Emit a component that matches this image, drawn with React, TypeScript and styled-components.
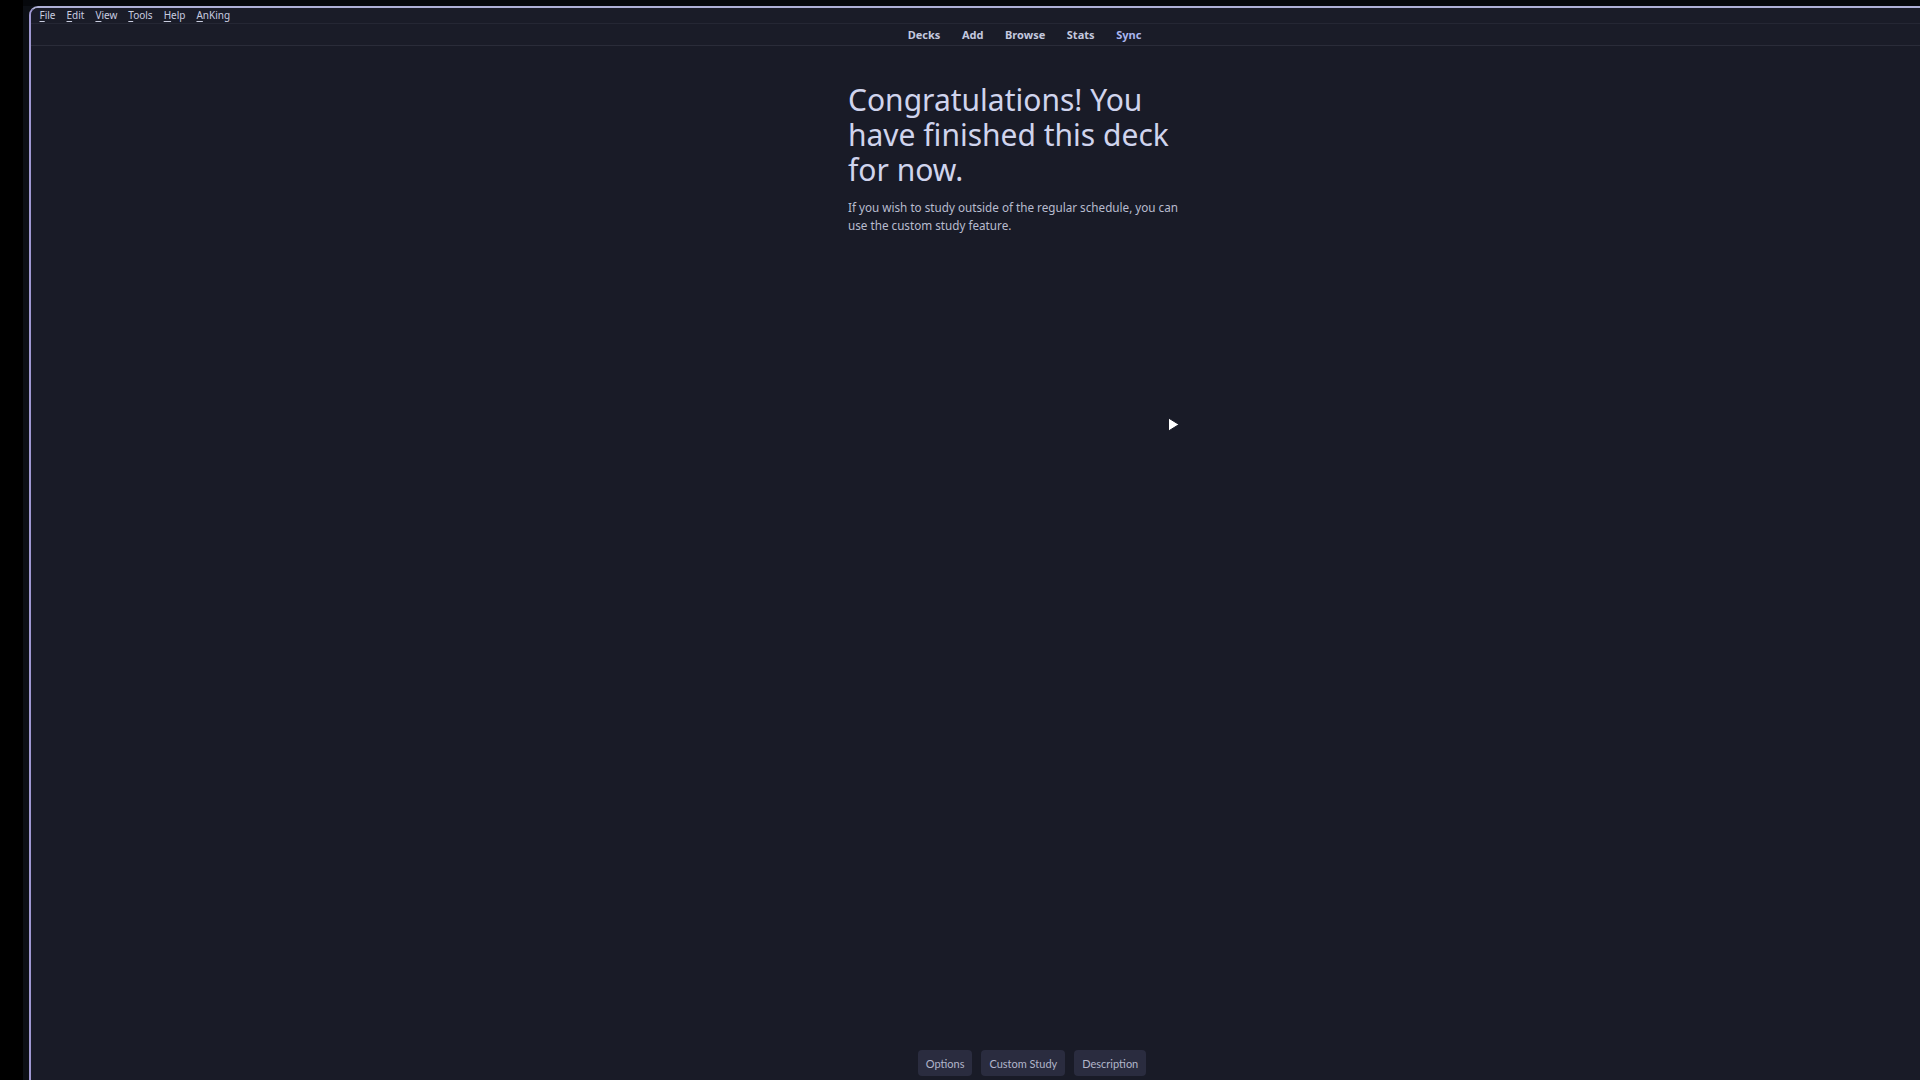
import React from "react";
import styled, { createGlobalStyle } from "styled-components";

const GlobalStyle = createGlobalStyle`
  html, body {
    margin: 0;
    padding: 0;
    width: 100%;
    height: 100%;
    overflow: hidden;
    background: #000;
  }
  #root {
    height: 100%;
  }
`;

const Screen = styled.div`
  display: flex;
  width: 1920px;
  height: 1080px;
  overflow: hidden;
  background: #000;
  position: relative;
`;

const BlackStrip = styled.div`
  flex: 0 0 23px;
  background: #000;
`;

const Gutter = styled.div`
  flex: 1 1 auto;
  min-width: 0;
  display: flex;
  padding: 6px 0 0 6px;
  background: linear-gradient(180deg, #06080c 0px, #06080c 6px, #0c0f15 6px);
  overflow: hidden;
`;

const Window = styled.div`
  flex: 0 0 1988px;
  width: 1988px;
  height: 1074px;
  display: flex;
  flex-direction: column;
  box-sizing: border-box;
  background: #191b27;
  border-top: 2px solid #aeb0d6;
  border-left: 2px solid #9f98d2;
  border-top-left-radius: 9px;
  overflow: hidden;
`;

const MenuBar = styled.div`
  height: 15px;
  display: flex;
  align-items: center;
  padding-left: 3px;
  border-bottom: 1px solid #252734;
  background: #1a1c28;
`;

const MenuItem = styled.span`
  padding: 0 5.5px;
  font-family: "Noto Sans", sans-serif;
  font-size: 10px;
  line-height: 15px;
  color: #c9cde0;
`;

const Mnemonic = styled.span`
  text-decoration: underline;
  text-underline-offset: 2px;
`;

const Toolbar = styled.nav`
  height: 21px;
  display: flex;
  align-items: center;
  justify-content: center;
  padding-left: 1px;
  border-bottom: 1px solid #2a2c39;
  background: #1a1c28;
`;

const NavLink = styled.span<{ $accent?: boolean }>`
  padding: 0 10.8px;
  font-family: "Noto Sans", sans-serif;
  font-size: 11px;
  font-weight: 700;
  line-height: 21px;
  color: ${(p) => (p.$accent ? "#a9b6ef" : "#c3c8df")};
`;

const Main = styled.main`
  flex: 1 1 auto;
  display: flex;
  justify-content: center;
  align-items: flex-start;
  padding: 36px 4px 0 0;
`;

const Congrats = styled.section`
  width: 348px;
  font-family: "Noto Sans", sans-serif;
`;

const Heading = styled.h1`
  margin: 0 0 11px;
  font-size: 30px;
  font-weight: 400;
  line-height: 35px;
  color: #d0d4ed;
`;

const Para = styled.p`
  margin: 0;
  font-size: 11.7px;
  line-height: 18px;
  color: #b8bccf;
`;

const BottomBar = styled.footer`
  display: flex;
  justify-content: center;
  gap: 9px;
  padding: 0 0 4px 16px;
`;

const Button = styled.button`
  height: 26px;
  padding: 0 8px;
  border: none;
  border-radius: 4px;
  background: #2a2c3f;
  color: #b1b5ca;
  font-family: "Lato", sans-serif;
  font-size: 11px;
  cursor: default;
`;

const Cursor = styled.svg`
  position: absolute;
  left: 1167px;
  top: 417px;
`;

const menus = ["File", "Edit", "View", "Tools", "Help", "AnKing"];
const navs = ["Decks", "Add", "Browse", "Stats", "Sync"];

export default function App() {
  return (
    <>
      <GlobalStyle />
      <Screen>
        <BlackStrip />
        <Gutter>
          <Window>
            <MenuBar>
              {menus.map((m) => (
                <MenuItem key={m}>
                  <Mnemonic>{m[0]}</Mnemonic>
                  {m.slice(1)}
                </MenuItem>
              ))}
            </MenuBar>
            <Toolbar>
              {navs.map((n) => (
                <NavLink key={n} $accent={n === "Sync"}>
                  {n}
                </NavLink>
              ))}
            </Toolbar>
            <Main>
              <Congrats>
                <Heading>Congratulations! You have finished this deck for now.</Heading>
                <Para>
                  If you wish to study outside of the regular schedule, you can use the custom
                  study feature.
                </Para>
              </Congrats>
            </Main>
            <BottomBar>
              <Button>Options</Button>
              <Button>Custom Study</Button>
              <Button>Description</Button>
            </BottomBar>
          </Window>
        </Gutter>
        <Cursor width="14" height="16" viewBox="0 0 14 16">
          <polygon points="1.5,1 1.5,14 12,7.5" fill="#ffffff" stroke="#1a1c28" strokeWidth="1" />
        </Cursor>
      </Screen>
    </>
  );
}
